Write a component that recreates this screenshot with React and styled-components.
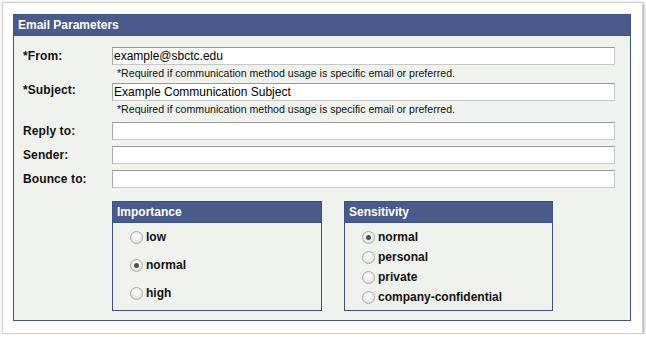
import React from 'react';
import styled, { createGlobalStyle } from 'styled-components';

const Global = createGlobalStyle`
    html, body {
        margin: 0;
        padding: 0;
        background: #ffffff;
    }
    body {
        font-family: "Liberation Sans", Arial, sans-serif;
    }
`;

const Card = styled.div`
    box-sizing: border-box;
    margin: 2px 0 0 2px;
    width: 641px;
    height: 332px;
    border: 1px solid #d0d0d0;
    box-shadow: 1px 1px 3px rgba(0, 0, 0, 0.35);
    background: #ffffff;
    padding: 11px 0 0 10px;
`;

const Panel = styled.div`
    box-sizing: border-box;
    width: 618px;
    height: 307px;
    border: 1px solid #3f5287;
    background: #f0f2ee;
`;

const PanelHeader = styled.div`
    height: 20px;
    line-height: 20px;
    background: #4a5a8b;
    color: #ffffff;
    font-weight: 700;
    font-size: 12px;
    padding-left: 4px;
    border-bottom: 1px solid #3f5287;
`;

const Form = styled.div`
    display: grid;
    grid-template-columns: 89px 503px;
    padding: 11px 0 0 9px;
    align-items: center;
`;

const Label = styled.div`
    font-size: 12px;
    font-weight: 700;
    color: #111;
    margin-top: ${p => p.$up || 0}px;
    letter-spacing: 0.1px;
`;

const Field = styled.input`
    box-sizing: border-box;
    height: 18px;
    width: 100%;
    margin: 0;
    padding: 0 1px;
    font-family: "Liberation Sans", Arial, sans-serif;
    font-size: 12px;
    color: #000;
    background: #fff;
    border: 1px solid #c8c8c8;
    border-top-color: #999;
    border-left-color: #a8a8a8;
    outline: none;
`;

const Help = styled.div`
    grid-column: 2;
    font-size: 10.6px;
    color: #111;
    height: 18px;
    line-height: 17px;
    padding-left: 5px;
`;

const Gap = styled.div`
    grid-column: 1 / span 2;
    height: ${p => p.$h}px;
`;

const Boxes = styled.div`
    display: flex;
    gap: 22px;
    margin: 13px 0 0 98px;
`;

const Group = styled.div`
    box-sizing: border-box;
    width: ${p => p.$w}px;
    height: 110px;
    border: 1px solid #3f5287;
    background: #f0f2ee;
`;

const GroupBody = styled.div`
    display: flex;
    flex-direction: column;
    padding: ${p => p.$pad}px 0 0 17px;
`;

const Option = styled.label`
    display: flex;
    align-items: center;
    height: ${p => p.$h}px;
    font-size: 12px;
    font-weight: 700;
    color: #111;
`;

const Radio = styled.span`
    box-sizing: border-box;
    width: 13px;
    height: 13px;
    border-radius: 50%;
    border: 1px solid #a9a9a9;
    background: radial-gradient(circle at 50% 35%, #ffffff 0%, #eaeaea 60%, #d4d4d4 100%);
    margin-right: 3px;
    display: flex;
    align-items: center;
    justify-content: center;
    &::after {
        content: '';
        width: 5px;
        height: 5px;
        border-radius: 50%;
        background: ${p => (p.$on ? '#505050' : 'transparent')};
    }
`;

const fields = [
    { label: '*From:', value: 'example@sbctc.edu', help: true },
    { label: '*Subject:', value: 'Example Communication Subject', help: true, up: -4 },
    { label: 'Reply to:', value: '' },
    { label: 'Sender:', value: '' },
    { label: 'Bounce to:', value: '' },
];

const importance = ['low', 'normal', 'high'];
const sensitivity = ['normal', 'personal', 'private', 'company-confidential'];

function RadioGroup({ title, options, selected, width, rowH, pad }) {
    return (
        <Group $w={width}>
            <PanelHeader>{title}</PanelHeader>
            <GroupBody $pad={pad}>
                {options.map(o => (
                    <Option key={o} $h={rowH}>
                        <Radio $on={o === selected} />
                        {o}
                    </Option>
                ))}
            </GroupBody>
        </Group>
    );
}

export default function App() {
    return (
        <>
            <Global />
            <Card>
                <Panel>
                    <PanelHeader>Email Parameters</PanelHeader>
                    <Form>
                        {fields.map((f, i) => (
                            <React.Fragment key={f.label}>
                                <Label $up={f.up}>{f.label}</Label>
                                <Field defaultValue={f.value} readOnly />
                                {f.help && (
                                    <Help>*Required if communication method usage is specific email or preferred.</Help>
                                )}
                                {i === 1 && <Gap $h={3} />}
                                {i > 1 && i < 4 && <Gap $h={6} />}
                            </React.Fragment>
                        ))}
                    </Form>
                    <Boxes>
                        <RadioGroup title="Importance" options={importance} selected="normal" width={210} rowH={28} pad={0} />
                        <RadioGroup title="Sensitivity" options={sensitivity} selected="normal" width={209} rowH={20} pad={4} />
                    </Boxes>
                </Panel>
            </Card>
        </>
    );
}
